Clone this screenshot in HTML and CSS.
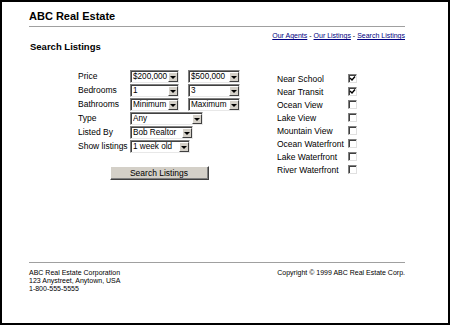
FILE: index.html
```html
<!DOCTYPE html>
<html lang="en">
<head>
    <meta charset="UTF-8">
    <meta name="viewport" content="width=device-width, initial-scale=1.0">
    <title>ABC Real Estate - Search Listings</title>
    <link rel="stylesheet" href="styles.css">
</head>
<body>
    <div class="window">
        <header class="masthead">
            <h1 class="site-title">ABC Real Estate</h1>
            <hr class="rule">
            <nav class="top-links">
                <a href="#">Our Agents</a> - <a href="#">Our Listings</a> - <a href="#">Search Listings</a>
            </nav>
        </header>

        <main class="search">
            <h2 class="search-title">Search Listings</h2>

            <form class="search-form" onsubmit="return false">
                <div class="criteria">
                    <div class="fields">
                        <span class="field-label">Price</span>
                        <span class="combo">
                            <select><option>$200,000</option></select>
                            <span class="combo-arrow"></span>
                        </span>
                        <span class="combo">
                            <select><option>$500,000</option></select>
                            <span class="combo-arrow"></span>
                        </span>

                        <span class="field-label">Bedrooms</span>
                        <span class="combo">
                            <select><option>1</option></select>
                            <span class="combo-arrow"></span>
                        </span>
                        <span class="combo">
                            <select><option>3</option></select>
                            <span class="combo-arrow"></span>
                        </span>

                        <span class="field-label">Bathrooms</span>
                        <span class="combo">
                            <select><option>Minimum</option></select>
                            <span class="combo-arrow"></span>
                        </span>
                        <span class="combo">
                            <select><option>Maximum</option></select>
                            <span class="combo-arrow"></span>
                        </span>

                        <span class="field-label">Type</span>
                        <span class="combo combo-wide combo-type">
                            <select><option>Any</option></select>
                            <span class="combo-arrow"></span>
                        </span>

                        <span class="field-label">Listed By</span>
                        <span class="combo combo-wide combo-agent">
                            <select><option>Bob Realtor</option></select>
                            <span class="combo-arrow"></span>
                        </span>

                        <span class="field-label">Show listings</span>
                        <span class="combo combo-wide combo-age">
                            <select><option>1 week old</option></select>
                            <span class="combo-arrow"></span>
                        </span>
                    </div>

                    <button class="search-button">Search Listings</button>
                </div>

                <ul class="features">
                    <li class="feature"><span class="feature-name">Near School</span><span class="checkbox"><svg viewBox="0 0 7 7" width="7" height="7"><polyline points="1,3 3,5 6,1.5" /></svg></span></li>
                    <li class="feature"><span class="feature-name">Near Transit</span><span class="checkbox"><svg viewBox="0 0 7 7" width="7" height="7"><polyline points="1,3 3,5 6,1.5" /></svg></span></li>
                    <li class="feature"><span class="feature-name">Ocean View</span><span class="checkbox"></span></li>
                    <li class="feature"><span class="feature-name">Lake View</span><span class="checkbox"></span></li>
                    <li class="feature"><span class="feature-name">Mountain View</span><span class="checkbox"></span></li>
                    <li class="feature"><span class="feature-name">Ocean Waterfront</span><span class="checkbox"></span></li>
                    <li class="feature"><span class="feature-name">Lake Waterfront</span><span class="checkbox"></span></li>
                    <li class="feature"><span class="feature-name">River Waterfront</span><span class="checkbox"></span></li>
                </ul>
            </form>
        </main>

        <footer class="site-footer">
            <hr class="rule">
            <div class="footer-body">
                <address class="company">
                    ABC Real Estate Corporation<br>
                    123 Anystreet, Anytown, USA<br>
                    1-800-555-5555
                </address>
                <p class="copyright">Copyright &copy; 1999 ABC Real Estate Corp.</p>
            </div>
        </footer>
    </div>
</body>
</html>
```

FILE: styles.css
```css
* {
    margin: 0;
    padding: 0;
    box-sizing: border-box;
}

body {
    background-color: white;
    color: black;
    font-family: "Liberation Sans", Arial, sans-serif;
}

.window {
    width: 450px;
    height: 325px;
    border: 2px solid black;
    padding: 8px 43px 0 27px;
    display: flex;
    flex-direction: column;
}

.site-title {
    font-size: 11px;
    line-height: 13px;
    font-weight: bold;
}

.rule {
    border: none;
    border-top: 1px solid #a0a0a0;
    margin-top: 3px;
}

.top-links {
    margin-top: 5px;
    text-align: right;
    font-size: 7px;
    line-height: 8px;
}
.top-links a {
    color: #000080;
}

.search-title {
    margin: 1px 0 0 1px;
    font-size: 9.5px;
    line-height: 12px;
    font-weight: bold;
}

.search-form {
    display: flex;
    margin-top: 17px;
    padding-left: 49px;
}

.criteria {
    width: 162px;
    display: flex;
    flex-direction: column;
}

.fields {
    display: grid;
    grid-template-columns: 43px 49px 52px;
    grid-auto-rows: 13px;
    column-gap: 9px;
    row-gap: 1px;
}

.field-label {
    font-size: 8.5px;
    line-height: 13px;
    white-space: nowrap;
}

.combo {
    display: flex;
    height: 13px;
    background-color: white;
    border: 1px solid;
    border-color: #808080 #e8e8e8 #e8e8e8 #808080;
    box-shadow: inset 1px 1px 0 #404040;
}
.combo select {
    flex: 1;
    min-width: 0;
    appearance: none;
    -webkit-appearance: none;
    border: none;
    outline: none;
    background: transparent;
    padding: 0 0 0 1px;
    margin: 1px 0 0 1px;
    font-family: inherit;
    font-size: 8.2px;
    line-height: 10px;
    color: black;
}
.combo-arrow {
    width: 10px;
    margin: 1px 0 0 0;
    background-color: #d4d0c8;
    border: 1px solid;
    border-color: #ffffff #404040 #404040 #ffffff;
    display: flex;
    align-items: center;
    justify-content: center;
}
.combo-arrow::before {
    content: "";
    border-top: 3px solid black;
    border-left: 3px solid transparent;
    border-right: 3px solid transparent;
}

.combo-wide {
    grid-column: span 2;
    justify-self: start;
}
.combo-type {
    width: 73px;
}
.combo-agent {
    width: 63px;
}
.combo-age {
    width: 60px;
}

.search-button {
    align-self: center;
    margin-top: 13px;
    width: 99px;
    height: 14px;
    background-color: #d4d0c8;
    border: 1px solid;
    border-color: #ffffff #404040 #404040 #ffffff;
    box-shadow: inset -1px -1px 0 #808080;
    font-family: inherit;
    font-size: 8.5px;
    color: black;
    cursor: pointer;
}

.features {
    list-style: none;
    margin-left: 37px;
    padding-top: 2px;
}

.feature {
    display: flex;
    align-items: center;
    height: 13px;
    font-size: 8.5px;
}

.feature-name {
    width: 71px;
    white-space: nowrap;
}

.checkbox {
    width: 9px;
    height: 9px;
    background-color: white;
    border: 1px solid;
    border-color: #808080 #e0e0e0 #e0e0e0 #808080;
    box-shadow: inset 1px 1px 0 #404040;
    display: flex;
    align-items: center;
    justify-content: center;
}
.checkbox svg {
    fill: none;
    stroke: black;
    stroke-width: 1.4;
}

.site-footer {
    margin-top: auto;
    padding-bottom: 30px;
}
.site-footer .rule {
    margin-top: 0;
}

.footer-body {
    display: flex;
    justify-content: space-between;
    margin-top: 6px;
    font-size: 7px;
    line-height: 8px;
    color: black;
}

.company {
    font-style: normal;
}
```
